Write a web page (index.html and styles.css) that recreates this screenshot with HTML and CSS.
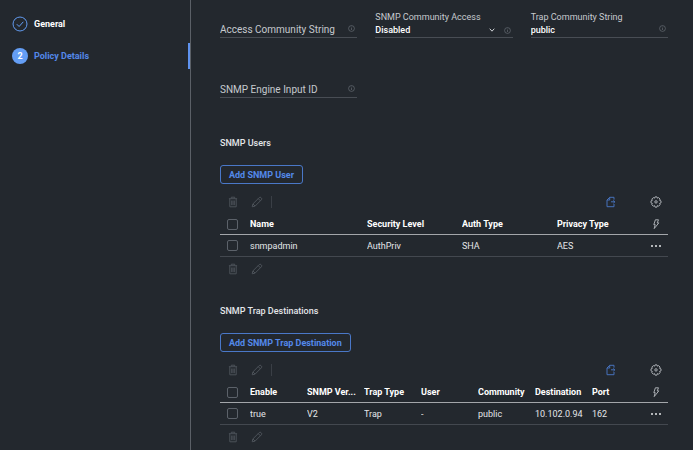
FILE: index.html
```html
<!DOCTYPE html>
<html lang="en">
<head>
<meta charset="utf-8">
<title>SNMP Policy Details</title>
<link rel="stylesheet" href="styles.css">
</head>
<body>
<svg class="sprite" aria-hidden="true">
  <symbol id="info" viewBox="0 0 12 12"><circle cx="6" cy="6" r="5"/><path d="M6 5.2v3.4M6 3v1.2"/></symbol>
  <symbol id="trash" viewBox="0 0 12 12"><path d="M1.9 2.7h8.2M4.3 2.5V1.2h3.4v1.3M2.8 2.9v7.9h6.4V2.9M4.7 4.5v4.7M6 4.5v4.7M7.3 4.5v4.7"/></symbol>
  <symbol id="pencil" viewBox="0 0 12 12"><path d="M1.2 10.8l.7-2.9 6.3-6.3q.9-.9 1.8 0l.4.4q.9.9 0 1.8l-6.3 6.3zM7.2 2.6l2.2 2.2M1.9 7.9l2.2 2.2"/></symbol>
  <symbol id="export" viewBox="0 0 12 12"><path d="M9 3.6V1.3H4.7L2 4v6.7h7V8M4.7 1.3V4H2M6 5.8h3.8M8.4 4.4l1.5 1.4-1.5 1.4"/></symbol>
  <symbol id="gear" viewBox="0 0 12 12"><path d="M5 .9h2l.4 1.3 1.2-.6 1.5 1.5-.6 1.2 1.5.6v2l-1.5.6.6 1.2-1.5 1.5-1.2-.6-.4 1.5H5l-.5-1.5-1.2.6-1.5-1.5.6-1.2L1 6.9v-2l1.4-.6-.6-1.2 1.5-1.5 1.2.6z"/><circle cx="6" cy="5.9" r="1.2"/></symbol>
  <symbol id="bolt" viewBox="0 0 12 12"><path d="M5.4 1.8h3.1L7.2 4.9h1.6L4.2 10.6l1-4H3.8z"/></symbol>
  <symbol id="dots" viewBox="0 0 12 12"><g fill="currentColor" stroke="none"><circle cx="2" cy="6" r="1"/><circle cx="6" cy="6" r="1"/><circle cx="10" cy="6" r="1"/></g></symbol>
</svg>
<div class="page">
  <nav class="steps" aria-label="Policy steps">
    <a class="step" href="#general">
      <svg class="step-mark" viewBox="0 0 16 16"><circle cx="8" cy="8" r="7"/><path d="M4.8 8.2l2.3 2.3 4.2-4.7"/></svg>
      General
    </a>
    <a class="step current" href="#details" aria-current="step">
      <span class="step-mark">2</span>
      Policy Details
    </a>
  </nav>
  <main class="content" id="details">
    <div class="fields">
      <div class="field empty">
        <input type="text" placeholder="Access Community String" aria-label="Access Community String">
        <svg class="info"><use href="#info"/></svg>
      </div>
      <div class="field">
        <label for="access">SNMP Community Access</label>
        <select id="access"><option>Disabled</option><option>Limited</option><option>Full</option></select>
        <svg class="chevron" viewBox="0 0 8 8"><path d="M1.7 2.7L4 5.2l2.3-2.5"/></svg>
        <svg class="info"><use href="#info"/></svg>
      </div>
      <div class="field">
        <label for="trap">Trap Community String</label>
        <input id="trap" type="text" value="public">
        <svg class="info"><use href="#info"/></svg>
      </div>
      <div class="field empty">
        <input type="text" placeholder="SNMP Engine Input ID" aria-label="SNMP Engine Input ID">
        <svg class="info"><use href="#info"/></svg>
      </div>
    </div>

    <section class="group">
      <h2>SNMP Users</h2>
      <button class="add" type="button">Add SNMP User</button>
      <div class="tools">
        <button type="button" aria-label="Delete" disabled><svg><use href="#trash"/></svg></button>
        <button type="button" aria-label="Edit" disabled><svg><use href="#pencil"/></svg></button>
        <span class="divider"></span>
        <button class="export" type="button" aria-label="Export"><svg><use href="#export"/></svg></button>
        <button class="gear" type="button" aria-label="Settings"><svg><use href="#gear"/></svg></button>
      </div>
      <table>
        <colgroup><col class="check"><col class="wide"><col class="mid"><col class="mid"><col><col class="action"></colgroup>
        <thead>
          <tr><th><input type="checkbox" aria-label="Select all users"></th><th>Name</th><th>Security Level</th><th>Auth Type</th><th>Privacy Type</th><th><svg><use href="#bolt"/></svg></th></tr>
        </thead>
        <tbody>
          <tr><td><input type="checkbox" aria-label="Select snmpadmin"></td><td>snmpadmin</td><td>AuthPriv</td><td>SHA</td><td>AES</td><td><button type="button" aria-label="Row actions"><svg><use href="#dots"/></svg></button></td></tr>
        </tbody>
      </table>
      <div class="tools">
        <button type="button" aria-label="Delete" disabled><svg><use href="#trash"/></svg></button>
        <button type="button" aria-label="Edit" disabled><svg><use href="#pencil"/></svg></button>
      </div>
    </section>

    <section class="group">
      <h2>SNMP Trap Destinations</h2>
      <button class="add" type="button">Add SNMP Trap Destination</button>
      <div class="tools">
        <button type="button" aria-label="Delete" disabled><svg><use href="#trash"/></svg></button>
        <button type="button" aria-label="Edit" disabled><svg><use href="#pencil"/></svg></button>
        <span class="divider"></span>
        <button class="export" type="button" aria-label="Export"><svg><use href="#export"/></svg></button>
        <button class="gear" type="button" aria-label="Settings"><svg><use href="#gear"/></svg></button>
      </div>
      <table>
        <colgroup><col class="check"><col class="slim"><col class="slim"><col class="slim"><col class="slim"><col class="slim"><col class="slim"><col><col class="action"></colgroup>
        <thead>
          <tr><th><input type="checkbox" aria-label="Select all destinations"></th><th>Enable</th><th>SNMP Ver...</th><th>Trap Type</th><th>User</th><th>Community</th><th>Destination</th><th>Port</th><th><svg><use href="#bolt"/></svg></th></tr>
        </thead>
        <tbody>
          <tr><td><input type="checkbox" aria-label="Select 10.102.0.94"></td><td>true</td><td>V2</td><td>Trap</td><td>-</td><td>public</td><td>10.102.0.94</td><td>162</td><td><button type="button" aria-label="Row actions"><svg><use href="#dots"/></svg></button></td></tr>
        </tbody>
      </table>
      <div class="tools">
        <button type="button" aria-label="Delete" disabled><svg><use href="#trash"/></svg></button>
        <button type="button" aria-label="Edit" disabled><svg><use href="#pencil"/></svg></button>
      </div>
    </section>
  </main>
</div>
</body>
</html>
```
FILE: styles.css
```css
* { box-sizing: border-box; }

body {
  margin: 0;
  background: #23282e;
  color: #e4e6e9;
  font: 9px/12px Roboto, "Liberation Sans", sans-serif;
}

button, input, select { font: inherit; color: inherit; }

svg {
  display: block;
  width: 12px;
  height: 12px;
  fill: none;
  stroke: currentColor;
  stroke-width: 1;
}

.sprite { position: absolute; width: 0; height: 0; }

.page { display: flex; min-height: 100vh; }

/* Step navigation */
.steps {
  width: 191px;
  flex: none;
  padding-top: 11px;
  border-right: 1px solid #5b6067;
}

.step {
  display: flex;
  align-items: center;
  gap: 6px;
  height: 26px;
  margin-bottom: 6px;
  padding-left: 12px;
  color: #ffffff;
  font-weight: 700;
  text-decoration: none;
}

.step-mark {
  width: 16px;
  height: 16px;
  border-radius: 50%;
  color: #649ef5;
}

.current { color: #5489ea; border-right: 2px solid #5e92ee; }

.current .step-mark {
  background: #649ef5;
  color: #ffffff;
  line-height: 16px;
  text-align: center;
}

/* Content */
.content {
  flex: 1;
  min-width: 0;
  padding: 10px 25px 0 29px;
}

.fields {
  display: grid;
  grid-template-columns: repeat(3, 1fr);
  gap: 32px 18px;
}

.field {
  display: grid;
  grid-template-columns: 1fr auto auto;
  grid-template-rows: 13px 14px;
  align-items: center;
  height: 28px;
  border-bottom: 1px solid #484d54;
}

.field label { grid-area: 1 / 1 / 2 / 4; color: #c6cace; }

.field input, .field select {
  grid-area: 2 / 1;
  min-width: 0;
  height: 14px;
  padding: 0;
  border: 0;
  background: none;
  color: #ffffff;
  font-weight: 500;
  outline: 0;
  appearance: none;
}

.field.empty input {
  grid-area: 1 / 1 / 3 / 2;
  align-self: end;
  height: 16px;
  font-size: 10px;
  font-weight: 400;
}

.empty input::placeholder { color: #c6cace; opacity: 1; }
.chevron { grid-area: 2 / 2; width: 8px; height: 8px; margin-right: 8px; color: #cfd2d6; }
.field .info { grid-area: 2 / 3; width: 7px; height: 7px; margin-right: 2px; color: #737981; }
.field input + .info { align-self: start; margin-top: 2px; }

.group h2 {
  margin: 24px 0 16px;
  font: inherit;
  font-weight: 500;
}

.fields + .group { margin-top: 39px; }
.fields + .group h2 { margin-top: 0; }

.add {
  height: 19px;
  padding: 0 8px;
  border: 1px solid #4a78c8;
  border-radius: 3px;
  background: none;
  color: #5489ea;
  font-weight: 700;
}

.tools {
  display: flex;
  align-items: center;
  gap: 12px;
  height: 24px;
  padding: 0 6px 0 7px;
  color: #4c5259;
}

.add + .tools { margin-top: 6px; }

.tools button, td button {
  display: block;
  padding: 0;
  border: 0;
  background: none;
}

.divider { width: 1px; height: 12px; margin-right: auto; margin-left: -4px; background: #3a3f46; }
.tools .export { margin-right: 21px; color: #4671ba; }
.tools .gear { color: #a9adb2; }

table {
  width: 100%;
  table-layout: fixed;
  border-collapse: separate;
  border-spacing: 0;
}

col.check { width: 30px; }
col.wide { width: 117px; }
col.mid { width: 95px; }
col.slim { width: 57px; }
col.action { width: 25px; }

th, td {
  height: 22px;
  padding: 0 4px 0 0;
  overflow: hidden;
  border-bottom: 1px solid #43484f;
  font-weight: 400;
  text-align: left;
  text-overflow: ellipsis;
  white-space: nowrap;
}

th {
  height: 21px;
  border-bottom-color: #a3a6aa;
  color: #ffffff;
  font-weight: 700;
}

th:first-child, td:first-child { padding: 0 0 0 7px; }
th:last-child, td:last-child { padding: 0 6px 0 7px; color: #a9adb2; }
td:last-child { color: #e4e6e9; }

table input {
  display: block;
  width: 11px;
  height: 11px;
  margin: 0;
  border: 1px solid #5c626a;
  border-radius: 2px;
  appearance: none;
}
```
